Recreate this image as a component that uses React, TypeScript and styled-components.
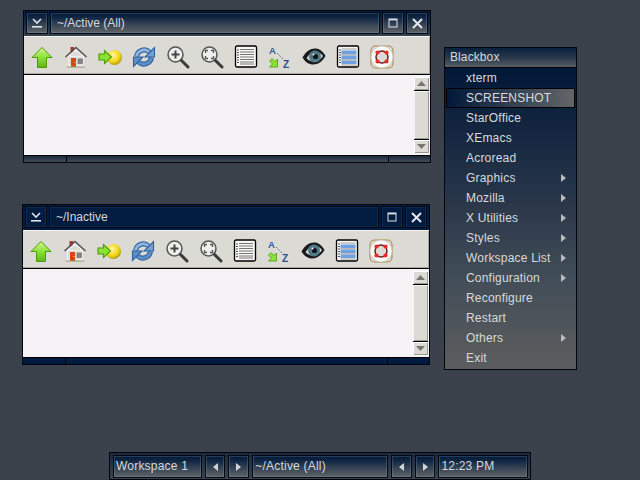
import React from 'react'
import styled, { createGlobalStyle, css } from 'styled-components'

const Global = createGlobalStyle`
  html, body { margin: 0; padding: 0; background: #3c444e; }
  body { font-family: "Liberation Sans", Arial, sans-serif; }
`

const dither = `repeating-conic-gradient(rgba(0,0,0,.07) 0 25%, transparent 0 50%) 0 0/2px 2px`
const shade = `linear-gradient(180deg, #01193a 0%, #142a48 25%, #3a4858 60%, #62666a 100%)`
const flat = `#011c40`

const Desktop = styled.div`
  position: relative;
  width: 640px;
  height: 480px;
  overflow: hidden;
  background: ${dither}, #3c444e;
`

const Win = styled.div<{ $x: number; $y: number }>`
  position: absolute;
  left: ${p => p.$x}px;
  top: ${p => p.$y}px;
  width: 408px;
  display: flex;
  flex-direction: column;
  box-sizing: border-box;
  border: 1px solid #02060c;
  background: #000;
`

const TitleBar = styled.div<{ $active: boolean }>`
  height: 25px;
  box-sizing: border-box;
  padding: 1px 2px 2px;
  display: flex;
  gap: 2px;
  background: ${p => (p.$active ? `${dither}, linear-gradient(180deg, #001a46, #0a2a50 40%, #3a4654)` : flat)};
`

const raised = css<{ $active: boolean }>`
  box-sizing: border-box;
  border: 1px solid #050a12;
  box-shadow: inset 0 0 0 1px ${p => (p.$active ? 'rgba(150,165,180,.25)' : 'rgba(70,100,140,.2)')};
  background: ${p => (p.$active ? `${dither}, ${shade}` : flat)};
`

const TitleLabel = styled.div<{ $active: boolean }>`
  ${raised}
  flex: 1;
  padding: 0 6px;
  color: #d6d9dc;
  font-size: 12px;
  line-height: 20px;
`

const TitleButton = styled.div<{ $active: boolean }>`
  ${raised}
  width: 22px;
  display: flex;
  align-items: center;
  justify-content: center;
`

const ToolRow = styled.div`
  height: 39px;
  box-sizing: border-box;
  padding: 8px 6px 5px;
  display: flex;
  gap: 10px;
  background: #dcdad5;
  border-top: 1px solid #f4f3f0;
  border-bottom: 1px solid #000;
  box-shadow: inset -1px -1px 0 #a9a7a1;
`

const ToolIcon = styled.div`
  width: 24px;
  height: 24px;
  flex: none;
`

const Body = styled.div<{ $h: number }>`
  height: ${p => p.$h}px;
  box-sizing: border-box;
  display: flex;
  justify-content: flex-end;
  background: #f6f3f6;
  padding: 2px 1px 2px 0;
`

const ScrollBar = styled.div`
  width: 15px;
  display: flex;
  flex-direction: column;
`

const ScrollBtn = styled.div`
  height: 13px;
  flex: none;
  display: flex;
  align-items: center;
  justify-content: center;
  background: #dcdad5;
  box-shadow: inset 1px 1px 0 #fff, inset -1px -1px 0 #9b9994;
`

const ScrollThumb = styled.div`
  flex: 1;
  background: #dcdad5;
  border-top: 1px solid #000;
  border-bottom: 1px solid #000;
  box-shadow: inset 1px 1px 0 #f6f5f2, inset -1px -1px 0 #9b9994;
`

const Handle = styled.div`
  height: 7px;
  display: grid;
  grid-template-columns: 42px 1fr 41px;
  gap: 1px;
  background: #000;
  border-top: 1px solid #000;
  box-sizing: border-box;
`

const HandlePart = styled.div<{ $active: boolean }>`
  background: ${p => (p.$active ? `${dither}, linear-gradient(180deg, #1b2b42, #454e58)` : flat)};
`

const Menu = styled.div`
  position: absolute;
  left: 444px;
  top: 47px;
  width: 133px;
  box-sizing: border-box;
  border: 1px solid #02060c;
  background: #000;
`

const MenuTitle = styled.div`
  height: 19px;
  padding-left: 5px;
  color: #d6d9dc;
  font-size: 12px;
  letter-spacing: 0.1px;
  line-height: 19px;
  background: ${dither}, linear-gradient(180deg, #0a2240, #2a3a4e 50%, #5b6068);
  border-bottom: 1px solid #000;
`

const MenuBody = styled.div`
  display: flex;
  flex-direction: column;
  padding: 0 1px 1px;
  background: ${dither}, linear-gradient(180deg, #01193a 0%, #2b394c 45%, #44505a 70%, #5f6062 100%);
`

const MenuRow = styled.div<{ $hi?: boolean }>`
  position: relative;
  height: 20px;
  box-sizing: border-box;
  padding-left: 20px;
  color: #d8dadc;
  font-size: 12px;
  letter-spacing: 0.2px;
  line-height: 20px;
  ${p =>
    p.$hi &&
    css`
      border: 1px solid #000;
      padding-left: 19px;
      line-height: 18px;
      background: ${dither}, linear-gradient(90deg, #01193a, #2a3a50 40%, #66696c);
    `}
`

const SubArrow = styled.span`
  position: absolute;
  right: 9px;
  top: 6px;
  width: 0;
  height: 0;
  border-left: 5px solid #b8bcc0;
  border-top: 4px solid transparent;
  border-bottom: 4px solid transparent;
`

const Slit = styled.div`
  position: absolute;
  left: 109px;
  top: 452px;
  width: 422px;
  height: 28px;
  box-sizing: border-box;
  display: flex;
  gap: 3px;
  padding: 2px 2px 1px 3px;
  border: 1px solid #02060c;
  background: ${dither}, linear-gradient(180deg, #1a2a40, #3c4652);
`

const SlitLabel = styled.div<{ $w: number }>`
  width: ${p => p.$w}px;
  box-sizing: border-box;
  padding-left: 2px;
  color: #d6d9dc;
  font-size: 12px;
  letter-spacing: 0.2px;
  line-height: 20px;
  border: 1px solid #050a12;
  box-shadow: inset 0 0 0 1px rgba(150, 165, 180, 0.25);
  background: ${dither}, ${shade};
`

const SlitButton = styled.div`
  width: 21px;
  box-sizing: border-box;
  display: flex;
  align-items: center;
  justify-content: center;
  border: 1px solid #050a12;
  box-shadow: inset 0 0 0 1px rgba(150, 165, 180, 0.25);
  background: ${dither}, ${shade};
`

const Tri = styled.span<{ $dir: 'l' | 'r' }>`
  width: 0;
  height: 0;
  border-top: 4px solid transparent;
  border-bottom: 4px solid transparent;
  ${p => (p.$dir === 'l' ? 'border-right: 5px solid #d0d4d8;' : 'border-left: 5px solid #d0d4d8;')}
`

const Shade = () => (
  <svg width="12" height="10" viewBox="0 0 12 10">
    <path d="M2 1l4 4 4-4" fill="none" stroke="#dfe3e6" strokeWidth="1.6" />
    <rect x="1" y="8" width="10" height="1.6" fill="#dfe3e6" />
  </svg>
)
const Maximize = () => (
  <svg width="10" height="10" viewBox="0 0 10 10">
    <rect x="1" y="1" width="8" height="8" fill="none" stroke="#dfe3e6" />
    <rect x="1" y="1" width="8" height="1.4" fill="#dfe3e6" />
  </svg>
)
const Close = () => (
  <svg width="11" height="11" viewBox="0 0 11 11">
    <path d="M1 1l9 9M10 1l-9 9" stroke="#e4e7ea" strokeWidth="2" />
  </svg>
)

const Up = () => (
  <svg viewBox="0 0 24 24">
    <defs>
      <linearGradient id="gr" x1="0" y1="0" x2="0" y2="1">
        <stop offset="0" stopColor="#d4f59a" />
        <stop offset=".5" stopColor="#8ae234" />
        <stop offset="1" stopColor="#5fb51a" />
      </linearGradient>
    </defs>
    <path d="M12 2.500L22 12.500H16.500V22.500H7.500V12.500H2Z" fill="url(#gr)" stroke="#4e9a06" strokeWidth="1" />
  </svg>
)
const Home = () => (
  <svg viewBox="0 0 24 24">
    <rect x="6.500" y="2" width="3.500" height="6" fill="#a33" />
    <path d="M4 11L12 3.500 20 11V22H4Z" fill="#eeeeec" />
    <path d="M5 13h14M5 15h14M5 17h14M5 19h14M9 8h6M7 10h10" stroke="#bbb" strokeWidth=".7" />
    <path d="M1.500 12L12 2.500 22.500 12" fill="none" stroke="#555" strokeWidth="1.600" />
    <rect x="7" y="13" width="5" height="9" fill="#ce4a0e" />
    <rect x="10.500" y="17" width="1" height="1" fill="#fce94f" />
    <rect x="14" y="14" width="4.500" height="4.500" fill="#888" stroke="#666" strokeWidth=".6" />
    <rect x="3" y="21.500" width="18" height="1" fill="#8a9a70" />
  </svg>
)
const Go = () => (
  <svg viewBox="0 0 24 24">
    <defs>
      <radialGradient id="ye" cx=".4" cy=".35" r=".7">
        <stop offset="0" stopColor="#fff6a8" />
        <stop offset=".6" stopColor="#f3d916" />
        <stop offset="1" stopColor="#a8920f" />
      </radialGradient>
    </defs>
    <circle cx="16.500" cy="12.500" r="7.500" fill="url(#ye)" />
    <path d="M1 9H6.500V5.500L13.500 12 6.500 18.500V15H1Z" fill="#8ae234" stroke="#4e9a06" strokeWidth="1.100" />
  </svg>
)
const Refresh = () => (
  <svg viewBox="0 0 24 24">
    <g fill="none" strokeWidth="5">
      <path d="M4.500 11.500A7.800 7.800 0 0 1 17.500 7" stroke="#2e5f9e" />
      <path d="M19.500 12.500A7.800 7.800 0 0 1 6.500 17" stroke="#2e5f9e" />
    </g>
    <g fill="none" strokeWidth="3">
      <path d="M4.500 11.500A7.800 7.800 0 0 1 17.500 7" stroke="#8db4df" />
      <path d="M19.500 12.500A7.800 7.800 0 0 1 6.500 17" stroke="#5b8fca" />
    </g>
    <path d="M22.500 2.500V12H13Z" fill="#729fcf" stroke="#2e5f9e" strokeWidth="1.100" />
    <path d="M1.500 21.500V12H11Z" fill="#5b8fca" stroke="#2e5f9e" strokeWidth="1.100" />
  </svg>
)
const Lens = ({ children }: { children: React.ReactNode }) => (
  <svg viewBox="0 0 24 24">
    <circle cx="9.500" cy="9.500" r="7.500" fill="#eeeeec" stroke="#555753" strokeWidth="1.500" />
    <path d="M15.500 15.500L22 22" stroke="#3a3c3a" strokeWidth="3" strokeLinecap="round" />
    {children}
  </svg>
)
const ZoomIn = () => (
  <Lens>
    <path d="M5.500 9.500h8M9.500 5.500v8" stroke="#444" strokeWidth="2" />
  </Lens>
)
const ZoomFit = () => (
  <Lens>
    <path d="M5.500 8V5.500H8M11 5.500h2.500V8M13.500 11v2.500H11M8 13.500H5.500V11" fill="none" stroke="#555" strokeWidth="1.300" />
  </Lens>
)
const Sheet = ({ children }: { children: React.ReactNode }) => (
  <svg viewBox="0 0 24 24">
    <rect x="2.500" y="1.500" width="21" height="21" rx="1.500" fill="#bbb" opacity=".5" />
    <rect x="1.500" y="1" width="21" height="21" rx="1.500" fill="#f7f7f5" stroke="#000" strokeWidth="1.300" />
    <path d="M4 4.500v1M4 7v1M4 9.500v1M4 12v1M4 14.500v1M4 17v1" stroke="#000" strokeWidth="1.300" />
    {children}
  </svg>
)
const List = () => (
  <Sheet>
    <path d="M6 4.500h14M6 7h14M6 9.500h14M6 12h14M6 14.500h14M6 17h14M6 19h14" stroke="#777" strokeWidth="1" />
  </Sheet>
)
const Detail = () => (
  <Sheet>
    <rect x="5.500" y="5.500" width="15" height="3.500" fill="#6fa0e0" />
    <rect x="5.500" y="10.500" width="15" height="3.500" fill="#6fa0e0" />
    <rect x="5.500" y="15.500" width="15" height="3.500" fill="#6fa0e0" />
    <path d="M5.500 4h15M5.500 9.800h15M5.500 14.800h15M5.500 20h15" stroke="#888" strokeWidth=".8" />
  </Sheet>
)
const Sort = () => (
  <svg viewBox="0 0 24 24">
    <text x="1" y="9" fontFamily="Liberation Sans, sans-serif" fontWeight="700" fontSize="9.500" fill="#2a5a9a">A</text>
    <text x="15" y="23" fontFamily="Liberation Sans, sans-serif" fontWeight="700" fontSize="10" fill="#2a4f8c">Z</text>
    <path d="M9 8l7 7" stroke="#345" strokeWidth="1" strokeDasharray="1 1.500" />
    <path d="M1 14L3.500 11.500 6.500 14.500 9 12V20H1L4 17Z" transform="translate(0.500 2)" fill="#8ae234" stroke="#4e9a06" strokeWidth=".8" />
  </svg>
)
const Eye = () => (
  <svg viewBox="0 0 24 24">
    <path d="M0.500 12.500C4 6 9 3 14 3.500c4 .4 7.500 3.500 9.500 7.500-3 5-7 8.500-12.500 8.500-4 0-8-2.500-10.500-7Z" fill="#1a1a1a" />
    <path d="M4.500 13C7 9 10 7 14 7c3 0 5.500 1.800 7 4-2 3.500-5 5.500-9.500 5.500-3 0-5.500-1.300-7-3.500Z" fill="#cfd8da" />
    <circle cx="13" cy="11.500" r="6" fill="#4f7a88" />
    <circle cx="13.500" cy="11.500" r="2.600" fill="#101418" />
    <circle cx="11.500" cy="9.500" r="1" fill="#fff" />
  </svg>
)
const Help = () => (
  <svg viewBox="0 0 24 24">
    <rect x="1" y="1" width="22" height="22" rx="4.500" fill="none" stroke="#b08a4a" strokeWidth="1.100" />
    <circle cx="12" cy="12" r="11" fill="#fafaf8" stroke="#c4c2bc" strokeWidth=".8" />
    <circle cx="12" cy="12" r="6" fill="#dcdad5" stroke="#6a2020" strokeWidth="1.500" />
    <circle cx="7.500" cy="7.500" r="2.100" fill="#ef2929" />
    <circle cx="16.500" cy="7.500" r="2.100" fill="#ef2929" />
    <circle cx="7.500" cy="16.500" r="2.100" fill="#ef2929" />
    <circle cx="16.500" cy="16.500" r="2.100" fill="#ef2929" />
  </svg>
)

const tools = [Up, Home, Go, Refresh, ZoomIn, ZoomFit, List, Sort, Eye, Detail, Help]

const menu: { label: string; sub?: boolean; hi?: boolean }[] = [
  { label: 'xterm' },
  { label: 'SCREENSHOT', hi: true },
  { label: 'StarOffice' },
  { label: 'XEmacs' },
  { label: 'Acroread' },
  { label: 'Graphics', sub: true },
  { label: 'Mozilla', sub: true },
  { label: 'X Utilities', sub: true },
  { label: 'Styles', sub: true },
  { label: 'Workspace List', sub: true },
  { label: 'Configuration', sub: true },
  { label: 'Reconfigure' },
  { label: 'Restart' },
  { label: 'Others', sub: true },
  { label: 'Exit' },
]

const AppWindow = ({ x, y, title, active, bodyHeight }: { x: number; y: number; title: string; active: boolean; bodyHeight: number }) => (
  <Win $x={x} $y={y}>
    <TitleBar $active={active}>
      <TitleButton $active={active}><Shade /></TitleButton>
      <TitleLabel $active={active}>{title}</TitleLabel>
      <TitleButton $active={active}><Maximize /></TitleButton>
      <TitleButton $active={active}><Close /></TitleButton>
    </TitleBar>
    <ToolRow>
      {tools.map((Icon, i) => (
        <ToolIcon key={i}><Icon /></ToolIcon>
      ))}
    </ToolRow>
    <Body $h={bodyHeight}>
      <ScrollBar>
        <ScrollBtn>
          <svg width="9" height="5"><path d="M0 5L4.500 0 9 5Z" fill="#77756f" /></svg>
        </ScrollBtn>
        <ScrollThumb />
        <ScrollBtn>
          <svg width="9" height="5"><path d="M0 0L4.500 5 9 0Z" fill="#77756f" /></svg>
        </ScrollBtn>
      </ScrollBar>
    </Body>
    <Handle>
      <HandlePart $active={active} />
      <HandlePart $active={active} />
      <HandlePart $active={active} />
    </Handle>
  </Win>
)

export default function App() {
  return (
    <Desktop>
      <Global />
      <AppWindow x={23} y={10} title="~/Active (All)" active bodyHeight={80} />
      <AppWindow x={22} y={204} title="~/Inactive" active={false} bodyHeight={88} />
      <Menu>
        <MenuTitle>Blackbox</MenuTitle>
        <MenuBody>
          {menu.map(m => (
            <MenuRow key={m.label} $hi={m.hi}>
              {m.label}
              {m.sub && <SubArrow />}
            </MenuRow>
          ))}
        </MenuBody>
      </Menu>
      <Slit>
        <SlitLabel $w={89}>Workspace 1</SlitLabel>
        <SlitButton><Tri $dir="l" /></SlitButton>
        <SlitButton><Tri $dir="r" /></SlitButton>
        <SlitLabel $w={136}>~/Active (All)</SlitLabel>
        <SlitButton><Tri $dir="l" /></SlitButton>
        <SlitButton><Tri $dir="r" /></SlitButton>
        <SlitLabel $w={90}>12:23 PM</SlitLabel>
      </Slit>
    </Desktop>
  )
}
